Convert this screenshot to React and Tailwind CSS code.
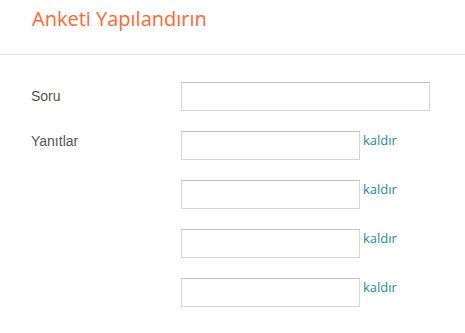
export default function App() {
  const answers = [0, 1, 2, 3];
  return (
    <div className="w-[465px] h-[333px] bg-white overflow-hidden">
      <div className="h-[55px] border-b border-[#e5e5e5] pl-[32px] pt-[5px]">
        <h1 className="text-[20px] leading-[28px] text-[#ff6633]" style={{ fontFamily: '"Open Sans", sans-serif' }}>
          Anketi Yapılandırın
        </h1>
      </div>
      <div className="pl-[31px] pt-[27px] flex flex-col gap-[20px]">
        <div className="flex">
          <div className="w-[150px] pt-[6px] text-[14px] leading-[16px] text-[#555]" style={{ fontFamily: '"Liberation Sans", Arial, sans-serif' }}>
            Soru
          </div>
          <input className="w-[249px] h-[29px] border border-[#d6d6d6] border-t-[#c2c2c2] outline-none" />
        </div>
        <div className="flex">
          <div className="w-[150px] pt-[2px] text-[14px] leading-[16px] text-[#555]" style={{ fontFamily: '"Liberation Sans", Arial, sans-serif' }}>
            Yanıtlar
          </div>
          <div className="flex flex-col gap-[20px]">
            {answers.map((i) => (
              <div key={i} className="flex items-start">
                <input className="w-[179px] h-[29px] border border-[#d6d6d6] border-t-[#c2c2c2] outline-none" />
                <a className="ml-[3px] text-[13px] leading-[18px] text-[#1e8a9f]" style={{ fontFamily: '"Open Sans", sans-serif' }}>
                  kaldır
                </a>
              </div>
            ))}
          </div>
        </div>
      </div>
    </div>
  );
}
